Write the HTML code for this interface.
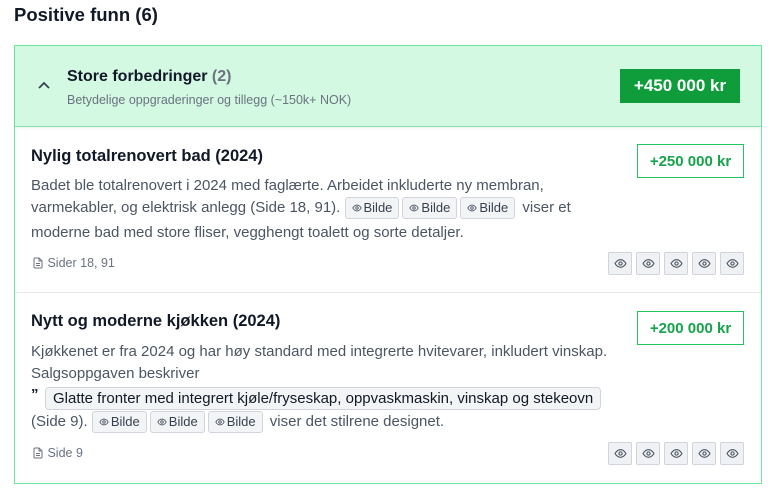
<!DOCTYPE html>
<html><head><meta charset="utf-8"><style>
*{margin:0;padding:0;box-sizing:border-box}
body{width:774px;height:491px;background:#fff;font-family:"Liberation Sans",sans-serif;color:#111827;position:relative;overflow:hidden}
.a{position:absolute;white-space:nowrap}
.t{font-size:15px;color:#4b5563}
.chip{display:inline-block;height:22px;line-height:20px;padding:0 6px;background:#f3f4f6;border:1px solid #d1d5db;border-radius:3px;font-size:13px;color:#374151;vertical-align:middle;margin-right:3px}
.chip svg{vertical-align:-1px;margin-right:2px}
.eye{position:absolute;width:24px;height:23px;background:#f0f1f4;border:1px solid #d1d5db;border-radius:2px;display:flex;align-items:center;justify-content:center}
.price{position:absolute;border:1.5px solid #22c55e;color:#16a34a;font-weight:bold;font-size:15px;display:flex;align-items:center;justify-content:center;width:107px;height:34px;background:#fff}
.sm{font-size:12.5px;color:#6b7280}
</style></head><body>
<svg width="0" height="0" style="position:absolute"><defs>
<symbol id="e" viewBox="0 0 24 24"><path d="M2 12s3.5-7 10-7 10 7 10 7-3.5 7-10 7S2 12 2 12z" fill="none" stroke="currentColor" stroke-width="2"/><circle cx="12" cy="12" r="3" fill="none" stroke="currentColor" stroke-width="2"/></symbol>
<symbol id="d" viewBox="0 0 24 24"><path d="M14 2H6a2 2 0 0 0-2 2v16a2 2 0 0 0 2 2h12a2 2 0 0 0 2-2V8z M14 2v6h6 M8 13h8 M8 17h8" fill="none" stroke="currentColor" stroke-width="2"/></symbol>
</defs></svg>
<div class="a" style="left:14px;top:4px;font-size:18.5px;font-weight:bold">Positive funn (6)</div>
<div style="position:absolute;left:14px;top:45px;width:748px;height:439px;border:1px solid #6ee7a0"></div>
<div style="position:absolute;left:15px;top:46px;width:746px;height:81px;background:#d3f9e3;border-bottom:1px solid #86e3ab;box-shadow:0 1px 3px rgba(0,0,0,.08)"></div>
<svg class="a" style="left:37px;top:80px" width="14" height="10" viewBox="0 0 14 10"><path d="M2 8l5-5 5 5" fill="none" stroke="#374151" stroke-width="1.8"/></svg>
<div class="a" style="left:67px;top:68px;font-size:16px;font-weight:bold">Store forbedringer <span style="color:#6b7280">(2)</span></div>
<div class="a" style="left:67px;top:93px;font-size:12.5px;color:#6b7280">Betydelige oppgraderinger og tillegg (~150k+ NOK)</div>
<div class="a" style="left:620px;top:69px;width:120px;height:34px;background:#0f9d3c;color:#fff;font-weight:bold;font-size:17px;display:flex;align-items:center;justify-content:center">+450 000 kr</div>

<div class="a" style="left:31px;top:147px;font-size:16.5px;font-weight:bold">Nylig totalrenovert bad (2024)</div>
<div class="price" style="left:637px;top:144px">+250 000 kr</div>
<div class="a t" style="left:31px;top:177px">Badet ble totalrenovert i 2024 med faglærte. Arbeidet inkluderte ny membran,</div>
<div class="a t" style="left:31px;top:197px;line-height:22px">varmekabler, og elektrisk anlegg (Side 18, 91). <span class="chip"><svg width="10" height="10"><use href="#e"/></svg>Bilde</span><span class="chip"><svg width="10" height="10"><use href="#e"/></svg>Bilde</span><span class="chip"><svg width="10" height="10"><use href="#e"/></svg>Bilde</span> viser et</div>
<div class="a t" style="left:31px;top:224px">moderne bad med store fliser, vegghengt toalett og sorte detaljer.</div>
<div class="a sm" style="left:32px;top:256px"><svg width="12" height="12" style="vertical-align:-2px"><use href="#d"/></svg> Sider 18, 91</div>
<div class="eye" style="left:608px;top:252px;color:#4b5563"><svg width="13" height="13"><use href="#e"/></svg></div>
<div class="eye" style="left:636px;top:252px;color:#4b5563"><svg width="13" height="13"><use href="#e"/></svg></div>
<div class="eye" style="left:664px;top:252px;color:#4b5563"><svg width="13" height="13"><use href="#e"/></svg></div>
<div class="eye" style="left:692px;top:252px;color:#4b5563"><svg width="13" height="13"><use href="#e"/></svg></div>
<div class="eye" style="left:720px;top:252px;color:#4b5563"><svg width="13" height="13"><use href="#e"/></svg></div>

<div style="position:absolute;left:15px;top:292px;width:746px;height:1px;background:#e5e7eb"></div>

<div class="a" style="left:31px;top:312px;font-size:16.5px;font-weight:bold">Nytt og moderne kjøkken (2024)</div>
<div class="price" style="left:637px;top:311px">+200 000 kr</div>
<div class="a t" style="left:31px;top:343px">Kjøkkenet er fra 2024 og har høy standard med integrerte hvitevarer, inkludert vinskap.</div>
<div class="a t" style="left:31px;top:365px">Salgsoppgaven beskriver</div>
<div class="a" style="left:31px;top:386px;font-size:15px;font-weight:bold;color:#111827">”</div>
<div class="a" style="left:45px;top:387px;height:23px;padding:0 7px;background:#f3f4f6;border:1px solid #d1d5db;border-radius:4px;font-size:15px;line-height:21px;color:#111827">Glatte fronter med integrert kjøle/fryseskap, oppvaskmaskin, vinskap og stekeovn</div>
<div class="a t" style="left:31px;top:411px;line-height:22px">(Side 9). <span class="chip"><svg width="10" height="10"><use href="#e"/></svg>Bilde</span><span class="chip"><svg width="10" height="10"><use href="#e"/></svg>Bilde</span><span class="chip"><svg width="10" height="10"><use href="#e"/></svg>Bilde</span> viser det stilrene designet.</div>
<div class="a sm" style="left:32px;top:446px"><svg width="12" height="12" style="vertical-align:-2px"><use href="#d"/></svg> Side 9</div>
<div class="eye" style="left:608px;top:442px;color:#4b5563"><svg width="13" height="13"><use href="#e"/></svg></div>
<div class="eye" style="left:636px;top:442px;color:#4b5563"><svg width="13" height="13"><use href="#e"/></svg></div>
<div class="eye" style="left:664px;top:442px;color:#4b5563"><svg width="13" height="13"><use href="#e"/></svg></div>
<div class="eye" style="left:692px;top:442px;color:#4b5563"><svg width="13" height="13"><use href="#e"/></svg></div>
<div class="eye" style="left:720px;top:442px;color:#4b5563"><svg width="13" height="13"><use href="#e"/></svg></div>
</body></html>
